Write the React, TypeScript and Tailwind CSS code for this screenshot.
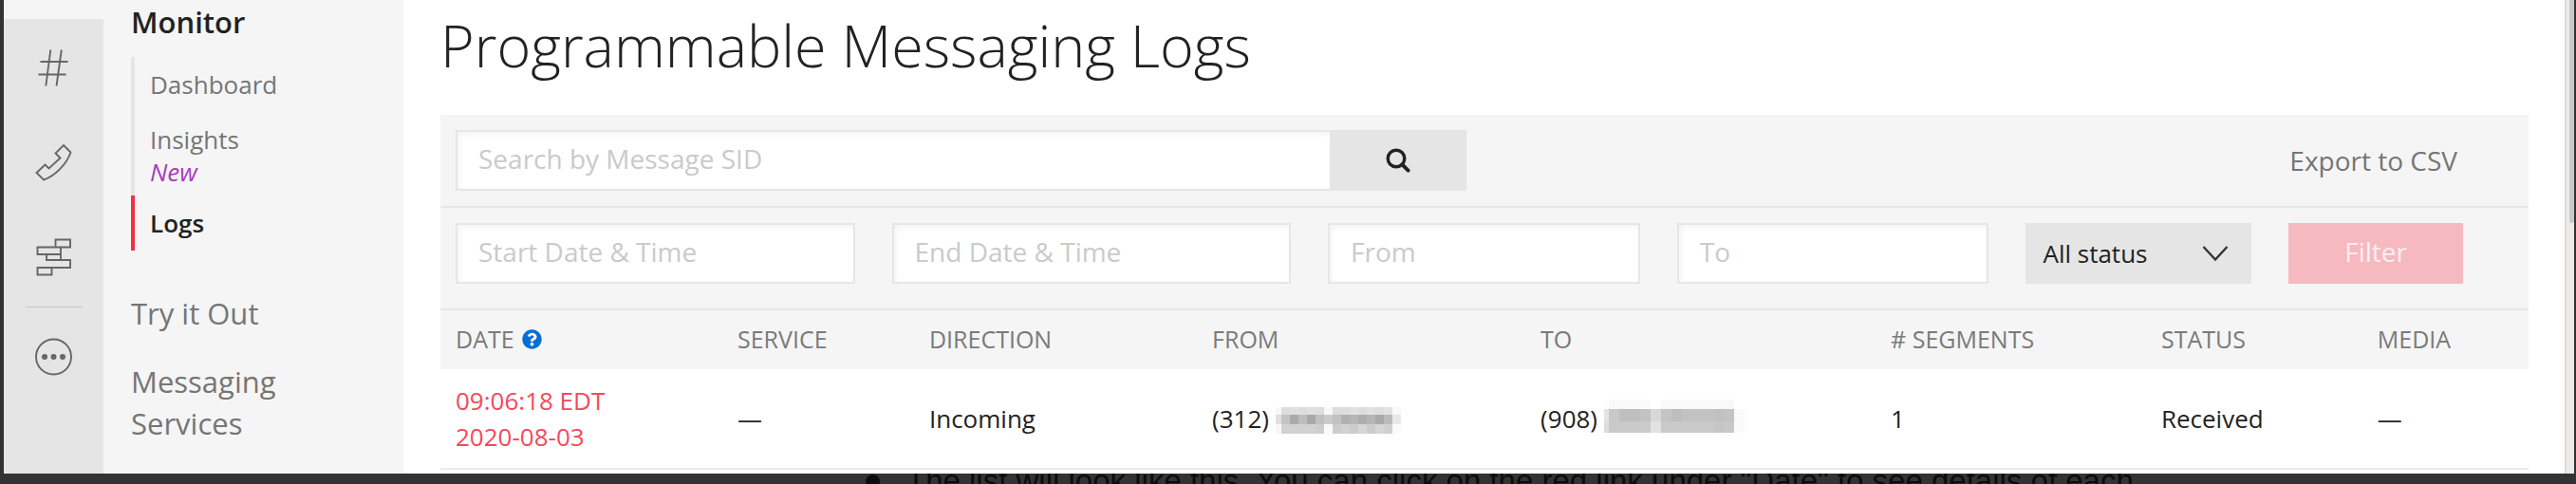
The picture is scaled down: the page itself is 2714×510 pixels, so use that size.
import type { ReactNode } from "react";
import { FaQuestionCircle } from "react-icons/fa";

function RailIcon({ label, children }: { label: string; children: ReactNode }) {
  return (
    <a href="#" aria-label={label} className="block">
      <svg viewBox="0 0 40 40" className="size-10" fill="none" stroke="#666" strokeWidth="1.9">
        {children}
      </svg>
    </a>
  );
}

function Rail() {
  return (
    <nav aria-label="Products" className="mt-5 flex w-[105px] shrink-0 flex-col items-center bg-[#e5e5e5] pt-[31px]">
      <div className="flex flex-col gap-[60px]">
        <RailIcon label="Phone numbers">
          <path d="M16.3 1.5L11.3 39.5M27.8 1.5L22.5 39.5M5.5 14H34.5M3.5 27.5H32.5" />
        </RailIcon>
        <RailIcon label="Voice">
          <path d="M30 2L37.5 9.5C33.5 21 22 34 9 38.5L1.5 31L10.5 22.5L14.5 26.5L26.5 15.5L21.5 10.5Z" />
        </RailIcon>
        <RailIcon label="Studio">
          <path d="M21.5 1.5H37V9.5H21.5ZM2.5 9.5H27V17H2.5ZM12 17H27V23H12ZM12 23H37V31H2.5M2.5 31H17.5V38.5H2.5Z" />
        </RailIcon>
      </div>
      <div className="my-8 h-px w-[60px] bg-[#c8c8c8]" />
      <RailIcon label="More products">
        <circle cx="19.5" cy="20" r="18.5" />
        <g fill="#666" stroke="none">
          <circle cx="10" cy="20" r="3" />
          <circle cx="19.5" cy="20" r="3" />
          <circle cx="29" cy="20" r="3" />
        </g>
      </RailIcon>
    </nav>
  );
}

function SideNav() {
  return (
    <nav aria-label="Messaging" className="flex w-[316px] shrink-0 flex-col bg-[#f5f5f5] pl-[29px] text-[31px] leading-[44px] text-[#757575]">
      <a href="#" className="pt-px font-semibold text-[#222]">Monitor</a>
      <ul className="mt-[15px] mb-11 text-[26px] leading-[34px]">
        <li className="border-l-4 border-[#e5e5e5] pt-3 pb-3 pl-4">
          <a href="#">Dashboard</a>
        </li>
        <li className="border-l-4 border-[#e5e5e5] pt-3 pb-2 pl-4">
          <a href="#">
            Insights
            <span className="block text-[26px] leading-[34px] text-[#a93dbd] italic">New</span>
          </a>
        </li>
        <li className="border-l-4 border-[#f22f46] pt-3 pb-3 pl-4 font-semibold text-[#222]">
          <a href="#" aria-current="page">Logs</a>
        </li>
      </ul>
      <a href="#">Try it Out</a>
      <a href="#" className="mt-7 w-48">Messaging Services</a>
    </nav>
  );
}

function Field({ label, className = "" }: { label: string; className?: string }) {
  return (
    <input
      aria-label={label}
      placeholder={label}
      className={`h-16 w-full min-w-0 border-2 border-[#e6e6e6] bg-white px-[22px] pb-1 text-[28px] text-[#222] shadow-[inset_2px_2px_6px_rgba(0,0,0,0.05)] placeholder:text-[#cacaca] ${className}`}
    />
  );
}

type Mosaic = { xs: number[]; ys: number[]; rows: string[] };

const FROM_MASK: Mosaic = {
  xs: [0, 6, 15, 24, 33, 42, 51, 60, 69, 78, 87, 96, 105, 114, 123, 132],
  ys: [8, 16, 26, 36],
  rows: [
    "f7 dd e0 dd e0 dd f8 dd dd e2 dd e2 dd e2 f9",
    "e0 c4 ab be a9 c0 cb c2 b0 b6 ae b6 a9 bb e8",
    "f7 d2 d2 d2 d2 ce fa cc d2 cc d6 cc d6 d0 fb",
  ],
};

const TO_MASK: Mosaic = {
  xs: [0, 5, 16, 27, 38, 49, 60, 71, 82, 93, 104, 115, 126, 137, 148],
  ys: [0, 10, 23, 35, 41],
  rows: [
    "fd f9 f9 f9 fb ff f9 f9 f9 f9 f9 f9 f9 ff",
    "e4 c9 bf bf c3 d8 c4 be c3 c3 c3 c1 c4 fa",
    "dd c9 c9 c9 cb e2 c9 c9 c9 c9 c9 c6 c9 fa",
    "ff fd fd fd fd ff fd fd fd fd fd fd fd ff",
  ],
};

function MaskedPhone({ area, mask }: { area: string; mask: Mosaic }) {
  return (
    <div className="flex items-center gap-[7px]">
      <span>{area}</span>
      <svg width="148" height="41" viewBox="0 0 148 41" shapeRendering="crispEdges" aria-hidden="true">
        {mask.rows.map((row, r) =>
          row.split(" ").map((v, c) => (
            <rect
              key={`${r}-${c}`}
              x={mask.xs[c]}
              y={mask.ys[r]}
              width={mask.xs[c + 1] - mask.xs[c]}
              height={mask.ys[r + 1] - mask.ys[r]}
              fill={`#${v}${v}${v}`}
            />
          )),
        )}
      </svg>
    </div>
  );
}

function Filters() {
  return (
    <form className="bg-[#f5f5f5]">
      <div className="flex items-center justify-between border-b-2 border-[#e6e6e6] py-4 pr-[75px] pl-4">
        <div className="flex w-full max-w-[1065px]">
          <Field label="Search by Message SID" className="border-r-0" />
          <button type="button" aria-label="Search" className="flex h-16 w-36 shrink-0 items-center justify-center bg-[#e5e5e5]">
            <svg viewBox="0 0 26 26" className="size-[26px]" fill="none" stroke="#222" strokeWidth="3.4">
              <circle cx="11" cy="11" r="8.8" />
              <path d="M17.3 17.3L23.6 23.6" strokeWidth="4" strokeLinecap="round" />
            </svg>
          </button>
        </div>
        <a href="#" className="text-[28px] whitespace-nowrap text-[#757575]">Export to CSV</a>
      </div>
      <div className="grid grid-cols-[421fr_421fr_329fr_329fr_238fr_184fr] gap-[39px] border-b-2 border-[#e6e6e6] pt-4 pr-[69px] pb-[26px] pl-4">
        <Field label="Start Date & Time" />
        <Field label="End Date & Time" />
        <Field label="From" />
        <Field label="To" />
        <div className="grid items-center bg-[#e5e5e5]">
          <select aria-label="Status" className="col-start-1 row-start-1 h-16 w-full appearance-none bg-transparent pl-[18px] text-[26px] text-[#222]">
            <option>All status</option>
            <option>Received</option>
          </select>
          <svg viewBox="0 0 28 18" className="pointer-events-none col-start-1 row-start-1 mr-6 h-[18px] w-7 justify-self-end" fill="none" stroke="#333" strokeWidth="2.4" aria-hidden="true">
            <path d="M1.5 2L14 15.5L26.5 2" />
          </svg>
        </div>
        <button type="button" className="h-16 bg-[#f6b9c0] pb-1 text-[28px] text-[#fdeef0]">Filter</button>
      </div>
    </form>
  );
}

function LogTable() {
  return (
    <table className="w-full table-fixed border-b-2 border-[#ebebeb] text-left text-[26px] leading-[38px] text-[#222]">
      <colgroup>
        <col className="w-[13.5%]" />
        <col className="w-[9.18%]" />
        <col className="w-[13.55%]" />
        <col className="w-[15.73%]" />
        <col className="w-[16.77%]" />
        <col className="w-[12.95%]" />
        <col className="w-[10.36%]" />
        <col className="w-[7.96%]" />
      </colgroup>
      <thead>
        <tr className="bg-[#f5f5f5] text-[25px] text-[#7a7a7a] uppercase [&>th]:pt-[11px] [&>th]:pb-[13px] [&>th]:pl-4 [&>th]:font-normal">
          <th>
            <span className="flex items-center gap-2">
              Date
              <FaQuestionCircle className="size-[21px] text-[#0070d2]" aria-label="Help" />
            </span>
          </th>
          <th>Service</th>
          <th>Direction</th>
          <th>From</th>
          <th>To</th>
          <th># Segments</th>
          <th>Status</th>
          <th>Media</th>
        </tr>
      </thead>
      <tbody>
        <tr className="[&>td]:py-[14px] [&>td]:pl-4">
          <td>
            <a href="#" className="block text-[#f4495d]">
              09:06:18 EDT
              <br />
              2020-08-03
            </a>
          </td>
          <td>—</td>
          <td>Incoming</td>
          <td><MaskedPhone area="(312)" mask={FROM_MASK} /></td>
          <td><MaskedPhone area="(908)" mask={TO_MASK} /></td>
          <td>1</td>
          <td>Received</td>
          <td>—</td>
        </tr>
      </tbody>
    </table>
  );
}

export default function App() {
  return (
    <div className="flex h-screen flex-col overflow-hidden bg-[#333] pr-0.5 pl-1 font-['Open_Sans',sans-serif]">
      <div className="flex min-h-0 flex-1 bg-[#f5f5f5]">
        <Rail />
        <SideNav />
        <main className="min-w-0 flex-1 bg-white pr-[38px] pl-[39px]">
          <h1 className="mt-2 mb-[33px] text-[61px] leading-[80px] font-light text-[#222]">Programmable Messaging Logs</h1>
          <Filters />
          <LogTable />
        </main>
        <div className="flex w-[10px] justify-end border-l-2 border-[#dcdada] bg-[#ecebea]">
          <div className="h-[235px] w-[5px] rounded-b bg-[#c9c9c9]" />
        </div>
      </div>
      <div className="h-[11px] shrink-0 overflow-hidden">
        <ul className="-mt-2.5 ml-[908px] font-['Liberation_Sans',sans-serif] text-[33px] leading-[36px] text-[#0c0c0c]">
          <li className="flex items-center gap-7">
            <span className="size-[15px] shrink-0 rounded-full bg-[#0c0c0c]" />
            The list will look like this. You can click on the red link under "Date" to see details of each
          </li>
        </ul>
      </div>
    </div>
  );
}
